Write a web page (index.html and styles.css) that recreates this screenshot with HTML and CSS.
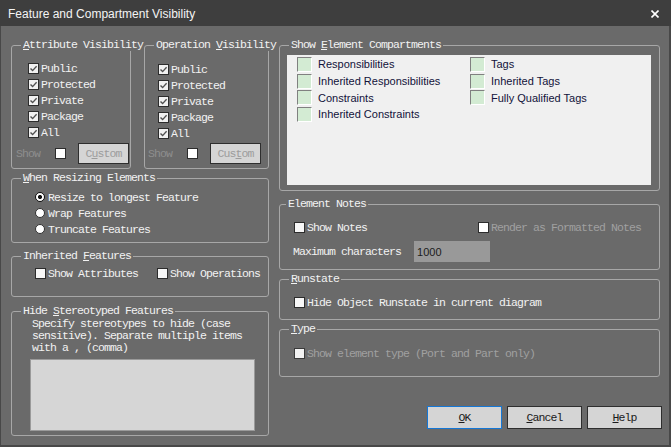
FILE: index.html
```html
<!DOCTYPE html>
<html>
<head>
<meta charset="utf-8">
<link rel="stylesheet" href="styles.css">
</head>
<body>
<div class="window">
  <div class="titlebar">
    <span class="title">Feature and Compartment Visibility</span>
    <svg class="close" width="8" height="8" viewBox="0 0 8 8"><path d="M0.5 0.5 L7.5 7.5 M7.5 0.5 L0.5 7.5" stroke="#ffffff" stroke-width="1.6" fill="none"/></svg>
  </div>
  <div class="frame">
    <div class="leftcol">
      <div class="vis-row">
        <fieldset class="group g-attr">
          <legend><u>A</u>ttribute Visibility</legend>
          <div class="checklist">
            <div class="row"><span class="cb on"><svg width="9" height="9" viewBox="0 0 9 9"><path d="M1.5 4.5 L3.6 6.6 L7.6 2.2" stroke="#505050" stroke-width="1.4" fill="none"/></svg></span>Public</div>
            <div class="row"><span class="cb on"><svg width="9" height="9" viewBox="0 0 9 9"><path d="M1.5 4.5 L3.6 6.6 L7.6 2.2" stroke="#505050" stroke-width="1.4" fill="none"/></svg></span>Protected</div>
            <div class="row"><span class="cb on"><svg width="9" height="9" viewBox="0 0 9 9"><path d="M1.5 4.5 L3.6 6.6 L7.6 2.2" stroke="#505050" stroke-width="1.4" fill="none"/></svg></span>Private</div>
            <div class="row"><span class="cb on"><svg width="9" height="9" viewBox="0 0 9 9"><path d="M1.5 4.5 L3.6 6.6 L7.6 2.2" stroke="#505050" stroke-width="1.4" fill="none"/></svg></span>Package</div>
            <div class="row"><span class="cb on"><svg width="9" height="9" viewBox="0 0 9 9"><path d="M1.5 4.5 L3.6 6.6 L7.6 2.2" stroke="#505050" stroke-width="1.4" fill="none"/></svg></span>All</div>
          </div>
          <div class="show-row">
            <span class="dim">Show</span><span class="cb"></span><span class="custom">C<u>u</u>stom</span>
          </div>
        </fieldset>
        <fieldset class="group g-op">
          <legend>Operation <u>V</u>isibility</legend>
          <div class="checklist">
            <div class="row"><span class="cb on"><svg width="9" height="9" viewBox="0 0 9 9"><path d="M1.5 4.5 L3.6 6.6 L7.6 2.2" stroke="#505050" stroke-width="1.4" fill="none"/></svg></span>Public</div>
            <div class="row"><span class="cb on"><svg width="9" height="9" viewBox="0 0 9 9"><path d="M1.5 4.5 L3.6 6.6 L7.6 2.2" stroke="#505050" stroke-width="1.4" fill="none"/></svg></span>Protected</div>
            <div class="row"><span class="cb on"><svg width="9" height="9" viewBox="0 0 9 9"><path d="M1.5 4.5 L3.6 6.6 L7.6 2.2" stroke="#505050" stroke-width="1.4" fill="none"/></svg></span>Private</div>
            <div class="row"><span class="cb on"><svg width="9" height="9" viewBox="0 0 9 9"><path d="M1.5 4.5 L3.6 6.6 L7.6 2.2" stroke="#505050" stroke-width="1.4" fill="none"/></svg></span>Package</div>
            <div class="row"><span class="cb on"><svg width="9" height="9" viewBox="0 0 9 9"><path d="M1.5 4.5 L3.6 6.6 L7.6 2.2" stroke="#505050" stroke-width="1.4" fill="none"/></svg></span>All</div>
          </div>
          <div class="show-row">
            <span class="dim">Show</span><span class="cb"></span><span class="custom">Cus<u>t</u>om</span>
          </div>
        </fieldset>
      </div>

      <fieldset class="group g-resize">
        <legend><u>W</u>hen Resizing Elements</legend>
        <div class="radiolist">
          <div class="row"><span class="radio on"></span>Resize to longest Feature</div>
          <div class="row"><span class="radio"></span>Wrap Features</div>
          <div class="row"><span class="radio"></span>Truncate Features</div>
        </div>
      </fieldset>

      <fieldset class="group g-inh">
        <legend>Inherited <u>F</u>eatures</legend>
        <div class="inh-row">
          <div class="row"><span class="cb"></span>Show Attributes</div>
          <div class="row second"><span class="cb"></span>Show Operations</div>
        </div>
      </fieldset>

      <fieldset class="group g-hide">
        <legend>Hide <u>S</u>tereotyped Features</legend>
        <p class="hint">Specify stereotypes to hide (case<br>sensitive). Separate multiple items<br>with a , (comma)</p>
        <div class="textarea"></div>
      </fieldset>
    </div>

    <div class="rightcol">
      <fieldset class="group g-comp">
        <legend>Show <u>E</u>lement Compartments</legend>
        <div class="listbox">
          <div class="litem"><span class="lcb"></span>Responsibilities</div>
          <div class="litem"><span class="lcb"></span>Inherited Responsibilities</div>
          <div class="litem"><span class="lcb"></span>Constraints</div>
          <div class="litem"><span class="lcb"></span>Inherited Constraints</div>
          <div class="litem"><span class="lcb"></span>Tags</div>
          <div class="litem"><span class="lcb"></span>Inherited Tags</div>
          <div class="litem"><span class="lcb"></span>Fully Qualified Tags</div>
        </div>
      </fieldset>

      <fieldset class="group g-notes">
        <legend>Element Notes</legend>
        <div class="notes-row">
          <div class="row"><span class="cb"></span>Show Notes</div>
          <div class="row render"><span class="cb"></span><span class="dim2">Render as Formatted Notes</span></div>
        </div>
        <div class="max-row">
          <span>Maximum characters</span><span class="input">1000</span>
        </div>
      </fieldset>

      <fieldset class="group g-run">
        <legend><u>R</u>unstate</legend>
        <div class="inner">
          <div class="row"><span class="cb"></span>Hide Object Runstate in current diagram</div>
        </div>
      </fieldset>

      <fieldset class="group g-type">
        <legend><u>T</u>ype</legend>
        <div class="inner">
          <div class="row"><span class="cb"></span><span class="dim2">Show element type (Port and Part only)</span></div>
        </div>
      </fieldset>

      <div class="buttons">
        <span class="btn default"><u>O</u>K</span>
        <span class="btn"><u>C</u>ancel</span>
        <span class="btn"><u>H</u>elp</span>
      </div>
    </div>
  </div>
</div>
</body>
</html>
```

FILE: styles.css
```css
* { box-sizing: border-box; }
html, body { margin: 0; padding: 0; }
body {
  width: 671px;
  height: 447px;
  overflow: hidden;
  background: #474747;
}
.window {
  width: 671px;
  height: 447px;
  display: flex;
  flex-direction: column;
  font-family: "Liberation Mono", monospace;
  font-size: 11.5px;
  letter-spacing: -0.9px;
  color: #f2f2f2;
}
u { text-decoration: underline; text-underline-offset: 1px; }

.titlebar {
  height: 26px;
  flex: none;
  background: #3e3e3e;
  display: flex;
  align-items: center;
  justify-content: space-between;
  padding: 0 12px 0 8px;
  font-family: "Liberation Sans", Arial, sans-serif;
  font-size: 12px;
  letter-spacing: 0;
  color: #f4f4f4;
}
.title { padding-top: 1px; }
.close { display: block; margin-top: 1px; }

.frame {
  flex: 1;
  display: flex;
  gap: 10px;
  background: #6a6a6a;
  border-left: 1px solid #484848;
  border-right: 2px solid #484848;
  border-bottom: 2px solid #484848;
  padding: 13px 9px 0 10px;
}
.leftcol { width: 258px; display: flex; flex-direction: column; }
.rightcol { width: 381px; display: flex; flex-direction: column; }

.group {
  margin: 0;
  padding: 0;
  min-width: 0;
  border: 1px solid #a7a7a7;
  border-radius: 3px;
}
.group legend {
  margin-left: 9px;
  padding: 0 2px;
  height: 12px;
  line-height: 12px;
  white-space: nowrap;
  width: max-content;
}

.row {
  height: 16px;
  display: flex;
  align-items: center;
  white-space: nowrap;
}
.cb {
  width: 11px;
  height: 11px;
  flex: none;
  border: 1px solid #2c2c2c;
  background: #f7f7f7;
  margin-right: 2px;
  display: flex;
  align-items: center;
  justify-content: center;
}
.cb.on { background: #f0f0f0; }
.cb svg { display: block; }
.radio {
  width: 10px;
  height: 10px;
  flex: none;
  border-radius: 50%;
  border: 1px solid #303030;
  background: #ffffff;
  margin-right: 3px;
}
.radio.on {
  border: 1.5px solid #111;
  background: radial-gradient(circle, #111 0 1.8px, #ffffff 2.3px);
}
.dim { color: #8e8e8e; }
.dim2 { color: #a0a0a0; }

/* visibility groups */
.vis-row { display: flex; gap: 13px; }
.g-attr { width: 120px; height: 130px; }
.g-op { width: 125px; height: 130px; }
.checklist { padding: 9px 0 0 16px; }
.g-op .checklist { padding: 10px 0 0 13px; }
.show-row {
  display: flex;
  align-items: center;
  height: 21px;
  margin-top: 3px;
  padding-left: 4px;
}
.g-op .show-row { margin-top: 2px; padding-left: 3px; }
.show-row .cb { margin-left: 15px; margin-right: 0; background: #ffffff; }
.custom {
  margin-left: 12px;
  width: 51px;
  height: 21px;
  border: 1px solid #2e2e2e;
  background: #d5d5d5;
  color: #9c9c9c;
  display: flex;
  align-items: center;
  justify-content: center;
}

.g-resize { height: 71px; margin-top: 3px; }
.radiolist { padding: 5px 0 0 23px; }

.g-inh { height: 47px; margin-top: 7px; }
.inh-row { display: flex; padding: 3px 0 0 23px; }
.inh-row .second { margin-left: 19px; }

.g-hide { height: 131px; margin-top: 8px; }
.hint {
  margin: 0;
  padding: 1px 0 0 20px;
  line-height: 12px;
  white-space: nowrap;
}
.textarea {
  margin: 5px 0 0 18px;
  width: 225px;
  height: 72px;
  background: #d6d6d6;
  border: 1px solid #9a9a9a;
}

/* right column */
.g-comp { height: 152px; }
.g-comp legend { margin-left: 9px; }
.listbox {
  margin: 4px 0 0 7px;
  width: 364px;
  height: 130px;
  background: #f0f0f0;
  padding: 1px 0 0 10px;
  display: grid;
  grid-template-columns: 173px 1fr;
  grid-template-rows: repeat(4, 16.7px);
  grid-auto-flow: column;
  align-content: start;
}
.litem {
  display: flex;
  align-items: center;
  font-family: "Liberation Sans", Arial, sans-serif;
  font-size: 11px;
  letter-spacing: 0;
  color: #12123a;
  white-space: nowrap;
}
.lcb {
  width: 15px;
  height: 15px;
  flex: none;
  margin-right: 6px;
  background: #d3ebd3;
  border-top: 1px solid #808080;
  border-left: 1px solid #808080;
  border-right: 1px solid #ffffff;
  border-bottom: 1px solid #ffffff;
}

.g-notes { height: 72px; margin-top: 7px; }
.g-notes legend { margin-left: 6px; }
.notes-row { display: flex; padding: 9px 0 0 14px; }
.notes-row .render { margin-left: 111px; }
.notes-row .render .cb { background: #ffffff; }
.max-row {
  display: flex;
  align-items: center;
  height: 21px;
  margin-top: 6px;
  padding-left: 13px;
}
.input {
  margin-left: 13px;
  width: 76px;
  height: 21px;
  background: #999999;
  padding-left: 3px;
  display: flex;
  align-items: center;
  font-family: "Liberation Sans", Arial, sans-serif;
  font-size: 11px;
  letter-spacing: 0;
  color: #1c1c1c;
}

.g-run { height: 47px; margin-top: 3px; }
.g-type { height: 54px; margin-top: 3px; }
.g-run .inner { padding: 9px 0 0 14px; }
.g-type .inner { padding: 10px 0 0 14px; }
.g-type .cb { background: #f2f2f2; border-color: #3a3a3a; }

.buttons {
  display: flex;
  justify-content: flex-end;
  gap: 5px;
  margin-top: 29px;
  margin-right: -2px;
}
.btn {
  width: 75px;
  height: 23px;
  border: 1px solid #2e2e2e;
  background: #d5d5d5;
  color: #1a1a1a;
  display: flex;
  align-items: center;
  justify-content: center;
}
.btn.default { border-color: #1577d6; }
```
